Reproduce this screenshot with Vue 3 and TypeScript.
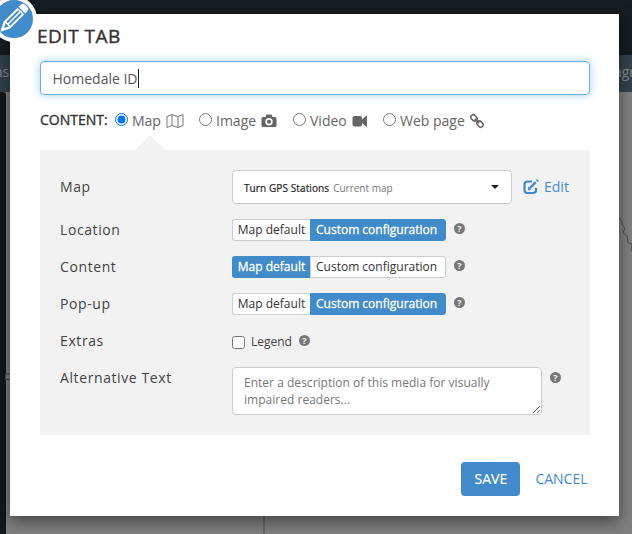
<script setup lang="ts">
import { ref } from 'vue'

const title = ref('Homedale ID')
const kinds = ['Map', 'Image', 'Video', 'Web page']
const kind = ref('Map')
const legend = ref(false)
const rows = ref([
  { label: 'Location', custom: true },
  { label: 'Content', custom: false },
  { label: 'Pop-up', custom: true },
])
</script>

<template>
  <div class="page">
    <div class="backdrop">
      <div class="header"></div>
      <div class="tabs"><span>ns</span><span class="right-tab">agr</span></div>
      <div class="canvas">
        <div class="side"></div>
        <div class="map"></div>
      </div>
      <svg class="river" width="20" height="50" viewBox="0 0 20 50"><path d="M1 1l3 5 1 4 2 2-2 5 4 3 1 7 4 1-1 6 3 4v5l3 5" /></svg>
      <svg class="handle" width="6" height="8" viewBox="0 0 6 8"><path d="M0 1h5M0 6.500h5M.5 1v6" /></svg>
    </div>

    <div class="modal">
      <div class="badge">
        <svg width="40" height="40" viewBox="0 0 40 40">
          <g transform="translate(6.500 32.500) rotate(-45)">
            <path fill="#fff" fill-rule="evenodd" d="M0 0L9-4.700H29V4.700H9zM5 0l4.500 2.400v-4.800zM11-2.700v1.900h16.500v-1.900zM11 .8v1.900h16.500V.8z" />
            <path fill="#fff" d="M30.200-4.700h3q3 0 3 3v3.400q0 3-3 3h-3z" />
            <path fill="#fff" d="M0 0l4-2.100v4.200z" />
          </g>
        </svg>
      </div>
      <h1>EDIT TAB</h1>
      <div class="title-input"><span>{{ title }}</span><i class="caret"></i></div>

      <div class="kinds">
        <span class="kinds-label">CONTENT:</span>
        <label v-for="(k, i) in kinds" :key="k" :class="['kind', 'kind-' + i]">
          <input v-model="kind" type="radio" name="kind" :value="k" />
          <span class="kind-name">{{ k }}</span>
          <svg v-if="i === 0" width="18" height="16" viewBox="0 0 18 16" fill="none" stroke="#777" stroke-width="1">
            <path d="M1 3.500l5-2 6 2 5-2v11l-5 2-6-2-5 2zM6 1.500v11M12 3.500v11" />
          </svg>
          <svg v-else-if="i === 1" width="16" height="16" viewBox="0 0 16 16">
            <path fill="#666" fill-rule="evenodd" d="M2 4h2.500l1-2.500h5L11.500 4H14q1.500 0 1.500 1.500v7q0 1.500-1.500 1.500H2Q.5 14 .5 12.500v-7Q.5 4 2 4zM8 5a3.700 3.700 0 1 0 0 7.400A3.700 3.700 0 0 0 8 5zm0 1.700a2 2 0 1 1 0 4 2 2 0 0 1 0-4z" />
          </svg>
          <svg v-else-if="i === 2" width="16" height="16" viewBox="0 0 16 16">
            <path fill="#666" d="M2.500 3H8q2 0 2 2v1.500L14 3h1v10.500h-1L10 10v1.500q0 2-2 2H2.500q-2 0-2-2V5q0-2 2-2z" />
          </svg>
          <svg v-else width="14" height="16" viewBox="0 0 14 16" fill="none" stroke="#666" stroke-width="1.600">
            <g transform="rotate(45 7 8)"><rect x="-.7" y="5.600" width="6.800" height="4.800" rx="2.400" /><rect x="7.900" y="5.600" width="6.800" height="4.800" rx="2.400" /><path d="M4 8h6" /></g>
          </svg>
        </label>
      </div>

      <div class="panel">
        <div class="pointer"></div>
        <div class="row map-row">
          <span class="label">Map</span>
          <div class="select">
            <span class="map-name">Turn GPS Stations</span><span class="map-note">Current map</span><i class="arrow"></i>
          </div>
          <a class="edit">
            <svg width="16" height="16" viewBox="0 0 16 16" fill="none" stroke="#428bca">
              <path stroke-width="2.200" d="M9 2.500H4.500q-3 0-3 3V11q0 3 3 3H10q3 0 3-3V9" />
              <path stroke-width="2.400" d="M6.800 9.200l6-6" /><path fill="#428bca" stroke="none" d="M5.200 7.800l3 3-3.400.8zM12.800 1l1-1 2 2-1 1z" />
            </svg><span>Edit</span>
          </a>
        </div>
        <div v-for="r in rows" :key="r.label" class="row">
          <span class="label">{{ r.label }}</span>
          <div class="toggle">
            <button :class="{ on: !r.custom }" @click="r.custom = false">Map default</button>
            <button :class="{ on: r.custom }" @click="r.custom = true">Custom configuration</button>
          </div>
          <i class="help">?</i>
        </div>
        <div class="row">
          <span class="label">Extras</span>
          <label class="check"><input v-model="legend" type="checkbox" /><span>Legend</span></label>
          <i class="help legend-help">?</i>
        </div>
        <div class="row alt-row">
          <span class="label">Alternative Text</span>
          <textarea placeholder="Enter a description of this media for visually impaired readers..."></textarea>
          <i class="help">?</i>
        </div>
      </div>

      <div class="actions">
        <button class="save">SAVE</button>
        <button class="cancel">CANCEL</button>
      </div>
    </div>
  </div>
</template>

<style>
body { overflow: hidden; }
</style>

<style scoped>
* { box-sizing: border-box; }
.page { position: relative; width: 632px; height: 534px; overflow: hidden; padding: 14px 13px 18px 10px; font-family: 'Open Sans', 'Noto Sans', sans-serif; color: #444; }
.backdrop { position: absolute; inset: 0; display: flex; flex-direction: column; }
.header { height: 55px; background: #171c21; }
.tabs { height: 37px; background: #34424e; color: #858a8e; font-size: 14px; line-height: 34px; display: flex; justify-content: space-between; overflow: hidden; }
.tabs span { margin-left: -6px; }
.tabs .right-tab { margin-right: -3px; }
.canvas { flex: 1; display: flex; background: #808080; }
.side { width: 6px; background: #12181c; border-top-right-radius: 3px; }
.map { width: 259px; border-right: 2px solid #646464; }
.river { position: absolute; left: 618px; top: 216px; fill: none; stroke: #505050; }
.handle { position: absolute; left: 5px; top: 373px; fill: none; stroke: #444; }
.modal { position: relative; width: 609px; height: 502px; background: #fff; padding: 10px 29px 0 30px; box-shadow: 0 5px 15px rgba(0, 0, 0, .5); }
.badge { position: absolute; left: -19px; top: -18px; width: 46px; height: 46px; border-radius: 50%; border: 4px solid #fff; background: #428bca; display: flex; align-items: center; justify-content: center; }
.badge svg { flex: none; }
h1 { margin: 0 0 0 -3px; height: 37px; line-height: 24px; font-size: 19px; font-weight: 400; letter-spacing: .5px; color: #333; -webkit-text-stroke: .4px #333; }
.title-input { height: 34px; border: 1px solid #66afe9; border-radius: 4px; box-shadow: inset 0 1px 1px rgba(0, 0, 0, .075), 0 0 8px rgba(102, 175, 233, .6); display: flex; align-items: center; padding-left: 11.500px; font-size: 14px; color: #555; }
.caret { width: 1px; height: 19px; background: #222; }
.kinds { display: flex; height: 55px; padding-top: 15px; font-size: 14px; line-height: 20px; color: #666; }
.kinds-label { width: 75px; color: #333; -webkit-text-stroke: .35px #333; white-space: nowrap; }
.kind { display: flex; white-space: nowrap; }
.kind input { width: 13px; height: 13px; margin: 3px 4px 0 0; flex: none; }
.kind-name { padding-top: 1px; }
.kind svg { margin: 3px 0 0 5px; }
.kind-0 { width: 84px; }
.kind-1 { width: 94px; }
.kind-2 { width: 90px; }
.panel { position: relative; height: 285px; background: #f2f2f2; padding: 20px 20px 0; }
.pointer { position: absolute; left: 95px; top: -15px; border: 15px solid transparent; border-top: 0; border-bottom-color: #f2f2f2; }
.row { display: flex; height: 37px; align-items: flex-start; }
.map-row { height: 49px; }
.label { width: 172px; font-size: 14px; line-height: 21px; letter-spacing: .6px; color: #444; flex: none; }
.map-row .label { line-height: 33px; }
.select { width: 280px; height: 34px; border: 1px solid #ccc; border-radius: 4px; background: #fff; display: flex; align-items: center; padding: 2px 12px 0 11px; font-size: 10px; white-space: nowrap; }
.map-name { color: #222; -webkit-text-stroke: .2px #222; letter-spacing: .1px; margin-right: 4px; }
.map-note { color: #777; }
.arrow { margin: -2px 0 0 auto; border: 4px solid transparent; border-top-color: #222; border-bottom: 0; }
.edit { display: flex; align-items: center; height: 33px; gap: 5px; margin-left: 11px; font-size: 14px; color: #428bca; }
.toggle { display: flex; width: 214px; height: 22px; }
.toggle button { height: 22px; margin: 0; padding: 0 5px 1px; border: 1px solid #ccc; background: #fff; color: #333; font: 12px/18px 'Open Sans', sans-serif; white-space: nowrap; }
.toggle button:first-child { width: 78px; border-right: 0; border-radius: 3px 0 0 3px; padding: 0 0 1px; }
.toggle button:last-child { width: 136px; border-radius: 0 3px 3px 0; text-align: left; }
.toggle button.on { background: #428bca; border-color: #428bca; color: #fff; -webkit-text-stroke: .3px #fff; }
.help { width: 11px; height: 11px; margin: 4px 0 0 8px; flex: none; border-radius: 50%; background: #777; color: #f2f2f2; font: bold 9px/11px 'Open Sans', sans-serif; text-align: center; }
.legend-help { margin: 5px 0 0 7px; }
.check { display: flex; font-size: 12px; line-height: 23px; color: #444; }
.check input { width: 13px; height: 13px; margin: 6px 6px 0 0; }
textarea { width: 310px; height: 48px; margin: 0; padding: 6px 11px; border: 1px solid #ccc; border-radius: 4px; background: #fff; font: 12px/17px 'Open Sans', sans-serif; letter-spacing: .02px; outline: 0; overflow: hidden; }
textarea::placeholder { color: #777; }
.alt-row .help { margin-top: 5px; }
.actions { display: flex; justify-content: flex-end; padding: 27px 2.500px 0 0; gap: 15px; }
.actions button { height: 34px; border: 0; padding: 0; font: 14px/20px 'Open Sans', sans-serif; }
.actions .save { width: 59px; border-radius: 4px; background: #428bca; color: #fff; -webkit-text-stroke: .2px #fff; }
.actions .cancel { background: none; color: #428bca; }
</style>
